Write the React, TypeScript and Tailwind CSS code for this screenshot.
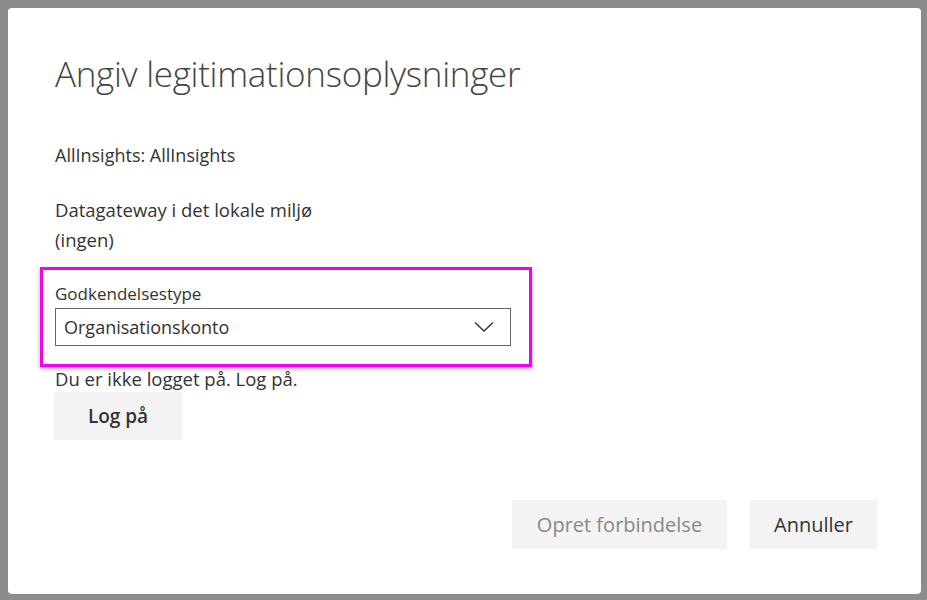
export default function App() {
  return (
    <div className="h-[600px] w-[927px] bg-[#8c8c8c] pl-[8px] pt-[8px] pr-[6px] pb-[6px] font-['Open_Sans',sans-serif]">
      <div className="flex h-full flex-col rounded-[4px] bg-white pl-[47px] pr-[44px] text-[#333]">
        <h1 className="mt-[38px] text-[35px] font-light leading-[56px] tracking-[-0.3px] text-[#444]">
          Angiv legitimationsoplysninger
        </h1>

        <p className="mt-[38px] text-[18px] leading-[30px]">AllInsights: AllInsights</p>

        <div className="mt-[25px] text-[18.5px] leading-[30px]">
          <p>Datagateway i det lokale miljø</p>
          <p>(ingen)</p>
        </div>

        <div className="mt-[12px] -ml-[15px] w-[492px] border-[3px] border-[#f000f0] pb-[18px] pl-[12px] pt-[12px] shadow-[0_2px_4px_rgba(0,0,0,0.35)]">
          <label className="block text-[17px] leading-[24px]">Godkendelsestype</label>
          <div className="mt-[2px] flex h-[38px] w-[456px] items-center justify-between border border-[#666] pl-[8px] pr-[16px]">
            <span className="text-[18px]">Organisationskonto</span>
            <svg width="20" height="12" viewBox="0 0 20 12" fill="none" stroke="#333" strokeWidth="1.4">
              <path d="M1 1.5 L10 10 L19 1.5" />
            </svg>
          </div>
        </div>

        <p className="-mt-[1px] text-[18.5px] leading-[26px]">Du er ikke logget på. Log på.</p>
        <button className="h-[48px] w-[128px] -ml-[1px] bg-[#f3f3f3] text-[19px] font-semibold text-[#333]">
          Log på
        </button>

        <div className="mt-auto mb-[45px] flex justify-end gap-[23px]">
          <button className="h-[49px] w-[215px] bg-[#f3f3f3] text-[20px] text-[#888]">Opret forbindelse</button>
          <button className="h-[49px] w-[127px] bg-[#f3f3f3] text-[20px] text-[#333]">Annuller</button>
        </div>
      </div>
    </div>
  );
}
